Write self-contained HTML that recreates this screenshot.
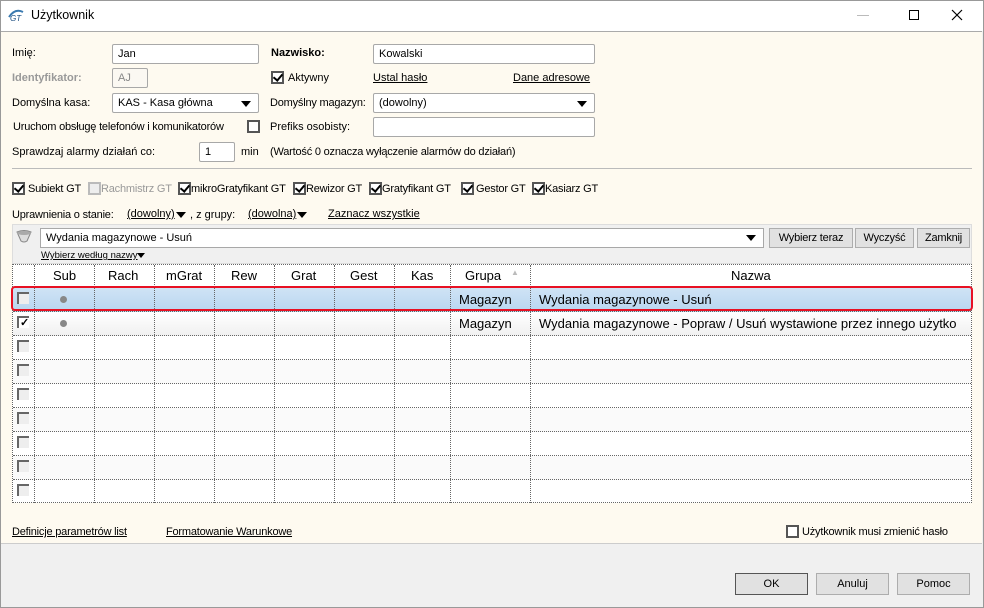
<!DOCTYPE html>
<html><head><meta charset="utf-8">
<style>
*{box-sizing:border-box;margin:0;padding:0}
body{width:984px;height:608px;overflow:hidden;background:#f0f0f0;font-family:"Liberation Sans",Arial,sans-serif;font-size:11px;color:#000;position:relative}
.a{position:absolute;white-space:nowrap}
.sm{letter-spacing:-0.2px}
.tb{position:absolute;left:0;top:0;width:984px;height:31px;background:#fff;border:1px solid #999;border-bottom:none}
.cream{position:absolute;left:1px;top:31px;width:981px;height:513px;background:#fefaf0;border-top:1px solid #aaa;border-bottom:1px solid #ccc}
.in{position:absolute;background:#fff;border:1px solid #a8a8a8;border-radius:2px;padding:3px 0 0 5px;height:20px}
.cb{position:absolute;width:13px;height:13px;border:2px solid #555;background:#fff}
.cb.c::after{content:"";position:absolute;left:2px;top:-1px;width:4px;height:7px;border:solid #000;border-width:0 2px 2px 0;transform:rotate(40deg)}
.dd{position:absolute;width:0;height:0;border-left:5px solid transparent;border-right:5px solid transparent;border-top:6px solid #000}
u{text-decoration:underline}
.btn{position:absolute;background:#e1e1e1;border:1px solid #adadad;text-align:center;line-height:18px}
.grid{position:absolute;left:12px;top:264px;width:960px;height:239px;background:#fff;border:1px dotted #666}
.vl{position:absolute;top:0;height:238px;border-left:1px dotted #666}
.hl{position:absolute;left:0;width:958px;border-top:1px dotted #666}
.gt{position:absolute;font-size:13px;white-space:nowrap}
.gc{position:absolute;left:4px;width:12px;height:12px;background:#eee;border-left:2px solid #666;border-top:2px solid #666}
</style></head><body>
<div class="tb"></div>
<svg class="a" style="left:8px;top:8px" width="16" height="14"><path d="M1 9 Q7 0 15 4" stroke="#3a7ab0" stroke-width="2" fill="none"/><text x="2" y="13" font-size="8" font-family="Liberation Sans" fill="#1a4d80" font-style="italic">GT</text></svg>
<div class="a" style="left:31px;top:8px;font-size:12.5px">Użytkownik</div>
<div class="a" style="left:857px;top:15px;width:12px;border-top:1px solid #bbb"></div>
<div class="a" style="left:909px;top:10px;width:10px;height:10px;border:1px solid #000"></div>
<svg class="a" style="left:951px;top:9px" width="12" height="12"><path d="M1 1L11 11M11 1L1 11" stroke="#000" stroke-width="1.2"/></svg>
<div class="cream"></div>

<div class="a" style="left:12px;top:47px">Imię:</div>
<div class="in" style="left:112px;top:44px;width:147px">Jan</div>
<div class="a" style="left:271px;top:47px;font-weight:bold">Nazwisko:</div>
<div class="in" style="left:373px;top:44px;width:222px">Kowalski</div>

<div class="a" style="left:12px;top:72px;color:#999;font-weight:bold">Identyfikator:</div>
<div class="in" style="left:112px;top:68px;width:36px;color:#888;background:#fbf8f2">AJ</div>
<div class="cb c" style="left:271px;top:71px"></div>
<div class="a" style="left:288px;top:72px">Aktywny</div>
<div class="a" style="left:373px;top:72px"><u>Ustal hasło</u></div>
<div class="a" style="left:513px;top:72px"><u>Dane adresowe</u></div>

<div class="a" style="left:12px;top:97px">Domyślna kasa:</div>
<div class="in" style="left:112px;top:93px;width:147px">KAS - Kasa główna</div>
<div class="dd" style="left:241px;top:101px"></div>
<div class="a sm" style="left:270px;top:97px">Domyślny magazyn:</div>
<div class="in" style="left:373px;top:93px;width:222px">(dowolny)</div>
<div class="dd" style="left:577px;top:101px"></div>

<div class="a sm" style="left:13px;top:121px">Uruchom obsługę telefonów i komunikatorów</div>
<div class="cb" style="left:247px;top:120px"></div>
<div class="a" style="left:270px;top:121px">Prefiks osobisty:</div>
<div class="in" style="left:373px;top:117px;width:222px"></div>

<div class="a" style="left:12px;top:146px">Sprawdzaj alarmy działań co:</div>
<div class="in" style="left:199px;top:142px;width:36px">1</div>
<div class="a" style="left:241px;top:146px">min</div>
<div class="a sm" style="left:270px;top:146px">(Wartość 0 oznacza wyłączenie alarmów do działań)</div>
<div class="a" style="left:12px;top:168px;width:960px;border-top:1px solid #bbb"></div>

<div class="cb c" style="left:12px;top:182px"></div><div class="a sm" style="left:28px;top:183px">Subiekt GT</div>
<div class="cb" style="left:88px;top:182px;border-color:#bbb;background:#eee"></div><div class="a sm" style="left:101px;top:183px;color:#999">Rachmistrz GT</div>
<div class="cb c" style="left:178px;top:182px"></div><div class="a sm" style="left:191px;top:183px">mikroGratyfikant GT</div>
<div class="cb c" style="left:293px;top:182px"></div><div class="a sm" style="left:306px;top:183px">Rewizor GT</div>
<div class="cb c" style="left:369px;top:182px"></div><div class="a sm" style="left:382px;top:183px">Gratyfikant GT</div>
<div class="cb c" style="left:461px;top:182px"></div><div class="a sm" style="left:476px;top:183px">Gestor GT</div>
<div class="cb c" style="left:532px;top:182px"></div><div class="a sm" style="left:545px;top:183px">Kasiarz GT</div>

<div class="a sm" style="left:12px;top:209px">Uprawnienia o stanie:</div>
<div class="a" style="left:127px;top:208px"><u>(dowolny)</u></div><div class="dd" style="left:176px;top:212px"></div>
<div class="a" style="left:190px;top:209px">, z grupy:</div>
<div class="a" style="left:248px;top:208px"><u>(dowolna)</u></div><div class="dd" style="left:297px;top:212px"></div>
<div class="a" style="left:328px;top:208px"><u>Zaznacz wszystkie</u></div>

<div class="a" style="left:12px;top:224px;width:960px;height:40px;background:#f0f0f0;border:1px solid #ddd"></div>
<svg class="a" style="left:16px;top:229px" width="16" height="14"><path d="M1 3 Q8 0 15 3 L11 12 Q8 14 5 12 Z" fill="#ddd" stroke="#888"/><ellipse cx="8" cy="4" rx="7" ry="2" fill="#aaa"/></svg>
<div class="in" style="left:40px;top:228px;width:724px;height:20px;border-radius:0">Wydania magazynowe - Usuń</div>
<div class="dd" style="left:746px;top:235px"></div>
<div class="btn sm" style="left:769px;top:228px;width:84px">Wybierz teraz</div>
<div class="btn sm" style="left:855px;top:228px;width:59px">Wyczyść</div>
<div class="btn sm" style="left:917px;top:228px;width:53px">Zamknij</div>
<div class="a" style="left:41px;top:250px;font-size:9.5px"><u>Wybierz według nazwy</u></div>
<div class="dd" style="left:137px;top:253px;border-left-width:4px;border-right-width:4px;border-top-width:5px"></div>

<div class="grid">
 <div class="a" style="left:0;top:23px;width:958px;height:24px;background:linear-gradient(#cfe3f5,#b8d6f0)"></div>
 <div class="a" style="left:0;top:47px;width:958px;height:24px;background:linear-gradient(#fff,#f0f0f0)"></div>
 <div class="a" style="left:0;top:95px;width:958px;height:24px;background:#fafafa"></div>
 <div class="a" style="left:0;top:143px;width:958px;height:24px;background:#fafafa"></div>
 <div class="a" style="left:0;top:191px;width:958px;height:24px;background:#fafafa"></div>
 <div class="vl" style="left:21px"></div><div class="vl" style="left:81px"></div><div class="vl" style="left:141px"></div><div class="vl" style="left:201px"></div><div class="vl" style="left:261px"></div><div class="vl" style="left:321px"></div><div class="vl" style="left:381px"></div><div class="vl" style="left:437px"></div><div class="vl" style="left:517px"></div>
 <div class="hl" style="top:22px"></div><div class="hl" style="top:46px"></div><div class="hl" style="top:70px"></div><div class="hl" style="top:94px"></div><div class="hl" style="top:118px"></div><div class="hl" style="top:142px"></div><div class="hl" style="top:166px"></div><div class="hl" style="top:190px"></div><div class="hl" style="top:214px"></div>
 <div class="gt" style="left:40px;top:3px">Sub</div><div class="gt" style="left:95px;top:3px">Rach</div><div class="gt" style="left:153px;top:3px">mGrat</div><div class="gt" style="left:218px;top:3px">Rew</div><div class="gt" style="left:278px;top:3px">Grat</div><div class="gt" style="left:337px;top:3px">Gest</div><div class="gt" style="left:398px;top:3px">Kas</div><div class="gt" style="left:452px;top:3px">Grupa</div><div class="gt" style="left:498px;top:3px;font-size:8px;color:#bbb">▲</div><div class="gt" style="left:718px;top:3px">Nazwa</div>
 <div class="gc" style="top:27px"></div><div class="a" style="left:47px;top:31px;width:7px;height:7px;border-radius:50%;background:#888"></div>
 <div class="gt" style="left:446px;top:27px">Magazyn</div><div class="gt" style="left:526px;top:27px">Wydania magazynowe - Usuń</div>
 <div class="gc" style="top:51px;background:#fff"></div><div class="a" style="left:7px;top:51px;font-size:11px;font-weight:bold">✓</div><div class="a" style="left:47px;top:55px;width:7px;height:7px;border-radius:50%;background:#888"></div>
 <div class="gt" style="left:446px;top:51px">Magazyn</div><div class="gt" style="left:526px;top:51px">Wydania magazynowe - Popraw / Usuń wystawione przez innego użytko</div>
 <div class="gc" style="top:75px"></div><div class="gc" style="top:99px"></div><div class="gc" style="top:123px"></div><div class="gc" style="top:147px"></div><div class="gc" style="top:171px"></div><div class="gc" style="top:195px"></div><div class="gc" style="top:219px"></div>
</div>
<div class="a" style="left:11px;top:286px;width:962px;height:25px;border:2px solid #e81123;border-radius:4px"></div>

<div class="a sm" style="left:12px;top:526px"><u>Definicje parametrów list</u></div>
<div class="a sm" style="left:166px;top:526px"><u>Formatowanie Warunkowe</u></div>
<div class="cb" style="left:786px;top:525px"></div>
<div class="a sm" style="left:802px;top:526px">Użytkownik musi zmienić hasło</div>

<div class="btn" style="left:735px;top:573px;width:73px;height:22px;line-height:20px;border-color:#555">OK</div>
<div class="btn" style="left:816px;top:573px;width:73px;height:22px;line-height:20px">Anuluj</div>
<div class="btn" style="left:897px;top:573px;width:73px;height:22px;line-height:20px">Pomoc</div>
<div class="a" style="left:0;top:0;width:984px;height:608px;border:1px solid #999;border-top:none"></div>
</body></html>
